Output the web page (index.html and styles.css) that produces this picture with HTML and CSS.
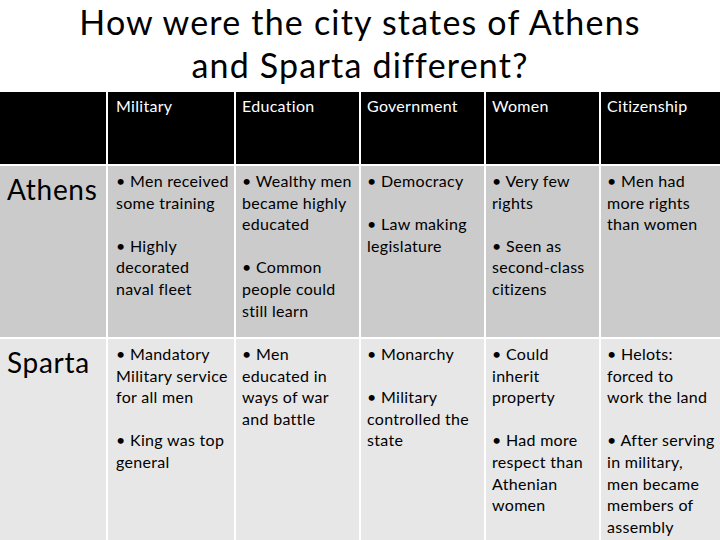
FILE: index.html
```html
<!DOCTYPE html>
<html>
<head>
<meta charset="utf-8">
<link rel="stylesheet" href="styles.css">
</head>
<body>
<div class="slide">
  <h1 class="title">How were the city states of Athens<br>and Sparta different?</h1>
  <div class="grid">
    <div class="cell head"></div>
    <div class="cell head c2">Military</div>
    <div class="cell head">Education</div>
    <div class="cell head">Government</div>
    <div class="cell head">Women</div>
    <div class="cell head">Citizenship</div>

    <div class="cell r1 label">Athens</div>
    <div class="cell r1 c2"><p>• Men received<br>some training</p><p>• Highly<br>decorated<br>naval fleet</p></div>
    <div class="cell r1"><p>• Wealthy men<br>became highly<br>educated</p><p>• Common<br>people could<br>still learn</p></div>
    <div class="cell r1"><p>• Democracy</p><p>• Law making<br>legislature</p></div>
    <div class="cell r1"><p>• Very few<br>rights</p><p>• Seen as<br>second-class<br>citizens</p></div>
    <div class="cell r1"><p>• Men had<br>more rights<br>than women</p></div>

    <div class="cell r2 label">Sparta</div>
    <div class="cell r2 c2"><p>• Mandatory<br>Military service<br>for all men</p><p>• King was top<br>general</p></div>
    <div class="cell r2"><p>• Men<br>educated in<br>ways of war<br>and battle</p></div>
    <div class="cell r2"><p>• Monarchy</p><p>• Military<br>controlled the<br>state</p></div>
    <div class="cell r2"><p>• Could<br>inherit<br>property</p><p>• Had more<br>respect than<br>Athenian<br>women</p></div>
    <div class="cell r2"><p>• Helots:<br>forced to<br>work the land</p><p>• After serving<br>in military,<br>men became<br>members of<br>assembly</p></div>
  </div>
</div>
</body>
</html>
```
FILE: styles.css
```css
html, body {
  margin: 0;
  padding: 0;
  background: #ffffff;
}
body {
  width: 720px;
  height: 540px;
  overflow: hidden;
  font-family: "Lato", "Liberation Sans", sans-serif;
  color: #000000;
}
.slide {
  width: 720px;
  height: 540px;
  display: flex;
  flex-direction: column;
}
.title {
  flex: 0 0 92px;
  height: 92px;
  margin: 0;
  padding: 0;
  box-sizing: border-box;
  font-size: 34px;
  font-weight: normal;
  letter-spacing: 1.2px;
  line-height: 43px;
  text-align: center;
}
.grid {
  display: grid;
  grid-template-columns: 106px 126px 123px 123px 113px 1fr;
  grid-template-rows: 72px 171px 210px;
  gap: 2px;
}
.cell {
  padding: 4px 0 0 6px;
  font-size: 16px;
  letter-spacing: 0.3px;
  line-height: 21.6px;
  white-space: nowrap;
  overflow: hidden;
}
.c2 {
  padding-left: 8px;
}
.cell p {
  margin: 0 0 21.6px 0;
}
.head {
  background: #000000;
  color: #ffffff;
  padding-top: 3px;
}
.r1 {
  background: #cbcbcb;
}
.r2 {
  background: #e7e7e7;
}
.label {
  font-size: 28px;
  letter-spacing: 0.7px;
  line-height: 34px;
  padding: 6px 0 0 7px;
}
```
